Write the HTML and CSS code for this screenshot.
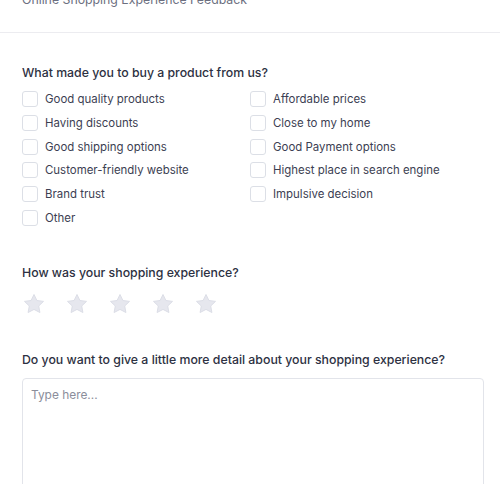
FILE: index.html
```html
<!DOCTYPE html>
<html>
<head>
<meta charset="utf-8">
<link rel="stylesheet" href="styles.css">
</head>
<body>
<div class="page">
  <header class="header">
    <h1 class="title">Online Shopping Experience Feedback</h1>
  </header>
  <main class="form">
    <section class="question q-reasons">
      <h2 class="q-title">What made you to buy a product from us?</h2>
      <div class="options">
        <label class="option"><span class="box"></span>Good quality products</label>
        <label class="option"><span class="box"></span>Affordable prices</label>
        <label class="option"><span class="box"></span>Having discounts</label>
        <label class="option"><span class="box"></span>Close to my home</label>
        <label class="option"><span class="box"></span>Good shipping options</label>
        <label class="option"><span class="box"></span>Good Payment options</label>
        <label class="option"><span class="box"></span>Customer-friendly website</label>
        <label class="option"><span class="box"></span>Highest place in search engine</label>
        <label class="option"><span class="box"></span>Brand trust</label>
        <label class="option"><span class="box"></span>Impulsive decision</label>
        <label class="option"><span class="box"></span>Other</label>
      </div>
    </section>
    <section class="question q-rating">
      <h2 class="q-title">How was your shopping experience?</h2>
      <div class="stars">
        <svg class="star" viewBox="0 0 24 24"><path d="M12 2.5l2.9 6 6.6.9-4.8 4.6 1.2 6.5L12 17.4l-5.9 3.1 1.2-6.5-4.8-4.6 6.6-.9z"/></svg>
        <svg class="star" viewBox="0 0 24 24"><path d="M12 2.5l2.9 6 6.6.9-4.8 4.6 1.2 6.5L12 17.4l-5.9 3.1 1.2-6.5-4.8-4.6 6.6-.9z"/></svg>
        <svg class="star" viewBox="0 0 24 24"><path d="M12 2.5l2.9 6 6.6.9-4.8 4.6 1.2 6.5L12 17.4l-5.9 3.1 1.2-6.5-4.8-4.6 6.6-.9z"/></svg>
        <svg class="star" viewBox="0 0 24 24"><path d="M12 2.5l2.9 6 6.6.9-4.8 4.6 1.2 6.5L12 17.4l-5.9 3.1 1.2-6.5-4.8-4.6 6.6-.9z"/></svg>
        <svg class="star" viewBox="0 0 24 24"><path d="M12 2.5l2.9 6 6.6.9-4.8 4.6 1.2 6.5L12 17.4l-5.9 3.1 1.2-6.5-4.8-4.6 6.6-.9z"/></svg>
      </div>
    </section>
    <section class="question q-detail">
      <h2 class="q-title">Do you want to give a little more detail about your shopping experience?</h2>
      <textarea class="detail" placeholder="Type here..."></textarea>
    </section>
  </main>
</div>
</body>
</html>
```
FILE: styles.css
```css
* { box-sizing: border-box; }
html, body { margin: 0; padding: 0; background: #fff; overflow: hidden; }
body { font-family: Inter, "Noto Sans", sans-serif; color: #2e3344; }
.page { margin-top: -10px; }
.header {
  padding: 0 16px 22px 22px;
  border-bottom: 1px solid #ececf0;
}
.title {
  margin: 0;
  font-size: 12.3px;
  line-height: 20px;
  font-weight: 400;
  color: #6c6f80;
}
.form { padding: 30px 16px 0 22px; }
.q-title {
  margin: 0;
  font-size: 12.3px;
  line-height: 20px;
  font-weight: 500;
  color: #2d3142;
}
.options {
  margin-top: 6px;
  display: grid;
  grid-template-columns: 228px 1fr;
  row-gap: 3.8px;
}
.option {
  display: flex;
  align-items: center;
  gap: 7px;
  height: 20px;
  font-size: 11.45px;
  color: #3c4052;
}
.box {
  width: 16px;
  height: 16px;
  border: 1px solid #dcdfe6;
  border-radius: 3px;
  background: #fff;
  flex: none;
}
.q-rating { margin-top: 35px; }
.stars { margin-top: 9px; display: flex; gap: 19px; }
.star { width: 24px; height: 24px; display: block; }
.star path {
  fill: #e6e7ee;
  stroke: #dcdee7;
  stroke-width: 1;
  stroke-linejoin: round;
}
.q-detail { margin-top: 34px; }
.detail {
  display: block;
  margin-top: 8px;
  width: 100%;
  height: 140px;
  border: 1px solid #e2e4ea;
  border-radius: 4px;
  padding: 6px 8px;
  font-family: Inter, "Noto Sans", sans-serif;
  font-size: 11.9px;
  line-height: 20px;
  resize: none;
  outline: none;
}
.detail::placeholder { color: #8b8e9b; }
```
